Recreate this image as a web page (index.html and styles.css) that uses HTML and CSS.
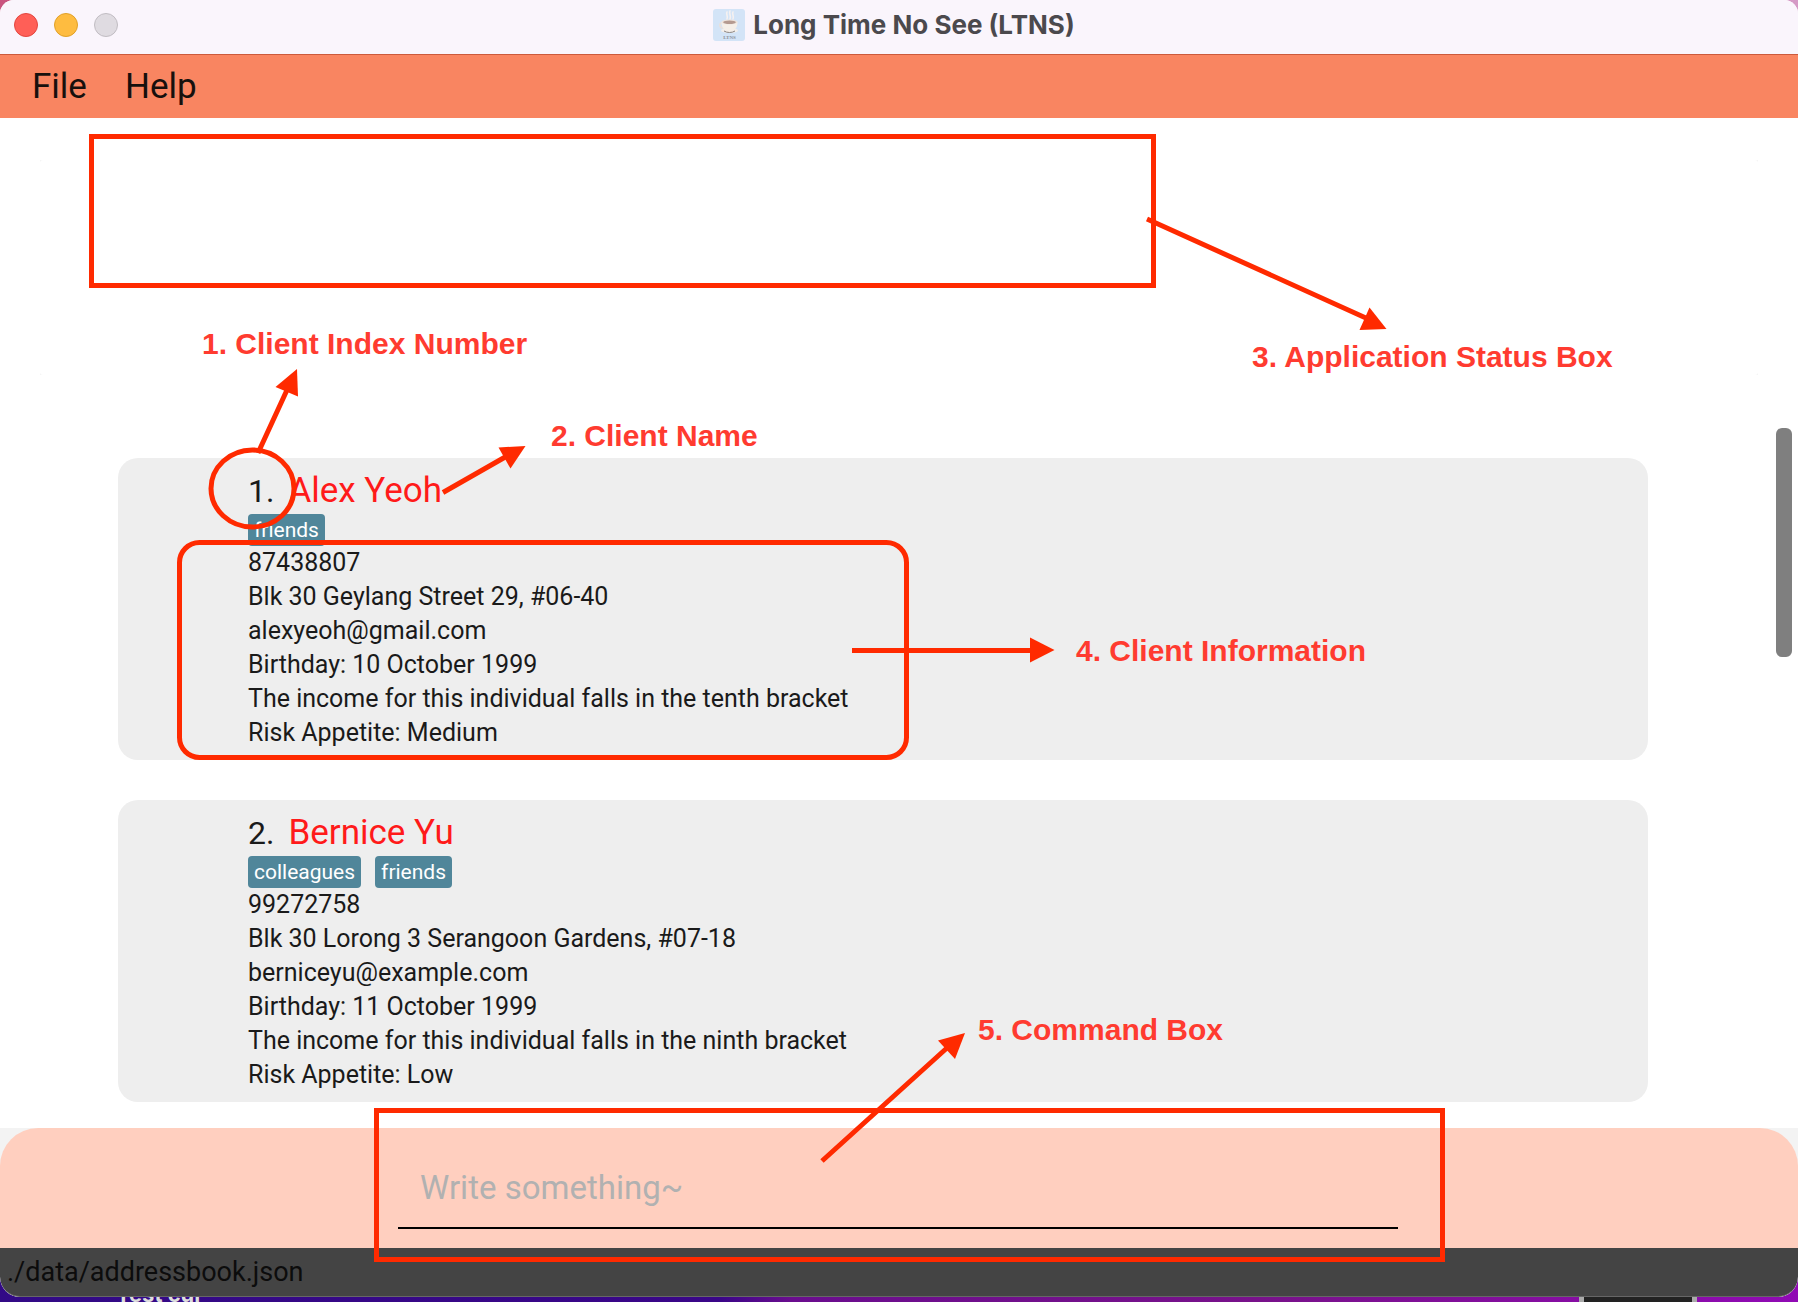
FILE: index.html
```html
<!DOCTYPE html>
<html lang="en">
<head>
<meta charset="utf-8">
<meta name="viewport" content="width=device-width, initial-scale=1">
<title>Long Time No See (LTNS)</title>
<link rel="stylesheet" href="styles.css">
</head>
<body>
<div class="desktop">
  <div class="window">
    <header class="titlebar">
      <div class="lights">
        <button class="light light-close" aria-label="Close"></button>
        <button class="light light-minimise" aria-label="Minimise"></button>
        <button class="light light-zoom" aria-label="Zoom" disabled></button>
      </div>
      <h1 class="title">
        <svg class="app-icon" viewBox="0 0 32 32" aria-hidden="true">
          <rect width="32" height="32" rx="3" fill="#d3e4f7"/>
          <g fill="none" stroke="#f6f1f0" stroke-width="1.6" stroke-linecap="round">
            <path d="M14 3c-1.500 2 1.500 4 0 7M17 2c-1.500 2 1.500 4 0 8M20 3c-1.500 2 1.500 4 0 7"/>
          </g>
          <path d="M9 14c-3-.5-3 5 1 5" fill="none" stroke="#e9e0db" stroke-width="1.500"/>
          <ellipse cx="16.500" cy="21.500" rx="8.500" ry="2.300" fill="#f3eeea"/>
          <path d="M11 22c3 2 8 2 11 0" fill="none" stroke="#8a8583" stroke-width="1"/>
          <path d="M8.500 13c0 6 3 9 8 9s8-3 8-9z" fill="#f5efe8"/>
          <ellipse cx="16.500" cy="13" rx="8" ry="2.600" fill="#eee4dc"/>
          <ellipse cx="16.500" cy="13.200" rx="6.300" ry="1.700" fill="#b49a90"/>
          <text class="app-icon-text" x="16.500" y="30" text-anchor="middle">LTNS</text>
        </svg>
        Long Time No See (LTNS)
      </h1>
    </header>

    <nav class="menubar">
      <button class="menu">File</button>
      <button class="menu">Help</button>
    </nav>

    <main class="content">
      <div class="status-frame"><div class="status-box" role="status"></div></div>
      <ol class="clients">
        <li class="client">
          <h2 class="client-head"><span class="client-index">1.</span><span class="client-name">Alex Yeoh</span></h2>
          <div class="tags"><span class="tag">friends</span></div>
          <p class="line">87438807</p>
          <p class="line">Blk 30 Geylang Street 29, #06-40</p>
          <p class="line">alexyeoh@gmail.com</p>
          <p class="line">Birthday: 10 October 1999</p>
          <p class="line">The income for this individual falls in the tenth bracket</p>
          <p class="line">Risk Appetite: Medium</p>
        </li>
        <li class="client">
          <h2 class="client-head"><span class="client-index">2.</span><span class="client-name">Bernice Yu</span></h2>
          <div class="tags"><span class="tag">colleagues</span><span class="tag">friends</span></div>
          <p class="line">99272758</p>
          <p class="line">Blk 30 Lorong 3 Serangoon Gardens, #07-18</p>
          <p class="line">berniceyu@example.com</p>
          <p class="line">Birthday: 11 October 1999</p>
          <p class="line">The income for this individual falls in the ninth bracket</p>
          <p class="line">Risk Appetite: Low</p>
        </li>
      </ol>
      <div class="scroll-thumb"></div>
    </main>

    <form class="command">
      <div class="command-panel">
        <input class="command-input" type="text" aria-label="Command" placeholder="Write something~">
      </div>
    </form>

    <footer class="statusbar">./data/addressbook.json</footer>
  </div>

  <div class="behind" aria-hidden="true">
    <span class="behind-label">Test cur</span>
    <span class="behind-window"></span>
  </div>

  <div class="notes">
    <svg class="marks" aria-hidden="true">
      <g class="outline">
        <path d="M91.500 136.500H1153.500V285.500H91.500Z"/>
        <ellipse cx="252.500" cy="488.500" rx="41.500" ry="38.500"/>
        <rect x="179.500" y="542.500" width="727" height="215" rx="20"/>
        <path d="M376.500 1110.500H1442.500V1259.500H376.500Z"/>
        <path d="M258 453L287 390M443 492.500L507 456M852 650.500H1032M1147 219L1367 318.500M822 1161L948 1047"/>
      </g>
      <g class="heads">
        <path d="M297 369L275.500 387L298 396.500Z"/>
        <path d="M525.500 446L498.500 447.500L510.500 468.500Z"/>
        <path d="M1054.500 650L1030 637.500V662.500Z"/>
        <path d="M1386.500 329L1369.500 307.500L1359.500 330Z"/>
        <path d="M965 1033L938 1040.500L955 1059Z"/>
      </g>
    </svg>
    <span class="note note-index">1. Client Index Number</span>
    <span class="note note-name">2. Client Name</span>
    <span class="note note-status">3. Application Status Box</span>
    <span class="note note-info">4. Client Information</span>
    <span class="note note-command">5. Command Box</span>
  </div>
</div>
</body>
</html>
```
FILE: styles.css
```css
* {
  box-sizing: border-box;
}

body,
h1,
h2,
p,
ol {
  margin: 0;
  padding: 0;
}

body {
  font-family: Roboto, "Liberation Sans", sans-serif;
  color: #1a1a1a;
}

button,
input {
  font: inherit;
  border: 0;
  padding: 0;
  background: none;
}

.desktop {
  position: relative;
  min-height: 100vh;
  overflow: hidden;
  display: flex;
  flex-direction: column;
  background:
    linear-gradient(90deg, #c9547f, #d59ac6) top / 100% 50% no-repeat,
    linear-gradient(90deg, #320a86 0%, #3a0688 40%, #6a0d8e 44%, #78128a 70%, #900ab4 100%);
}

/* Application window */
.window {
  flex: 1;
  display: flex;
  flex-direction: column;
  overflow: hidden;
  border-radius: 14px 14px 20px 20px;
  background: #fff;
}

.titlebar {
  display: grid;
  grid-template-columns: 1fr auto 1fr;
  align-items: center;
  height: 55px;
  padding: 0 14px 4px;
  background: #faf5fc;
  border-bottom: 1px solid #cc5a3c;
}

.lights {
  display: flex;
  gap: 16px;
}

.light {
  width: 24px;
  height: 24px;
  border-radius: 50%;
  border: 1px solid;
}

.light-close {
  background: #ff5f57;
  border-color: #e2463f;
}

.light-minimise {
  background: #febc40;
  border-color: #e0a028;
}

.light-zoom {
  background: #dfdbe1;
  border-color: #c0bcc2;
}

.title {
  grid-column: 2;
  display: flex;
  align-items: center;
  gap: 8px;
  padding-right: 10px;
  font: 700 26px/32px Inter, sans-serif;
  color: #4b494d;
}

.app-icon {
  width: 32px;
  height: 32px;
}

.app-icon-text {
  font: 700 5px "Liberation Serif", serif;
  fill: #8d9199;
}

.menubar {
  display: flex;
  gap: 38px;
  height: 63px;
  padding: 0 32px;
  background: #f98561;
}

.menu {
  font-size: 35px;
  line-height: 63px;
  color: #17100d;
}

.content {
  position: relative;
  flex: 1;
  padding: 42px 40px 26px;
}

.status-frame {
  background: #f4f4f4;
}

.status-box {
  min-height: 215px;
  border-radius: 3px;
  background: #fff;
}

.clients {
  display: flex;
  flex-direction: column;
  gap: 40px;
  margin: 83px 110px 0 78px;
  list-style: none;
}

.client {
  padding: 10px 130px;
  border-radius: 20px;
  background: #eee;
}

.client-head {
  display: flex;
  align-items: center;
  gap: 14px;
  font-weight: 400;
  line-height: 46px;
}

.client-index {
  font-size: 32px;
}

.client-name {
  font-size: 35px;
  color: #ff1a1a;
}

.tags {
  display: flex;
  gap: 14px;
}

.tag {
  padding: 0 6px;
  border-radius: 4px;
  background: #50869a;
  color: #fff;
  font-size: 21px;
  line-height: 32px;
}

.line {
  font-size: 25px;
  line-height: 34px;
}

.scroll-thumb {
  position: absolute;
  top: 310px;
  right: 6px;
  width: 16px;
  height: 229px;
  border-radius: 6px;
  background: #7f7f7f;
}

.command {
  background: #f3f3f3;
}

.command-panel {
  display: flex;
  justify-content: center;
  padding: 19px 400px 19px 398px;
  border-radius: 38px 38px 0 0;
  background: #ffcfbf;
}

.command-input {
  flex: 1;
  min-width: 0;
  height: 82px;
  padding: 0 22px;
  border-bottom: 2px solid #000;
  font-size: 33px;
}

.command-input::placeholder {
  color: #b1b1b1;
  opacity: 1;
}

.statusbar {
  padding: 0 7px;
  border-bottom: 1px solid #666;
  border-radius: 0 0 20px 20px;
  background: #444;
  color: #0c0c0c;
  font-size: 27px;
  line-height: 48px;
}

/* Strip of desktop that shows below the window */
.behind {
  display: flex;
  justify-content: space-between;
  height: 5px;
  padding: 0 101px 0 116px;
  overflow: hidden;
}

.behind-label {
  align-self: flex-end;
  color: #ddd;
  font: 700 22px/16px Inter, sans-serif;
}

.behind-window {
  width: 118px;
  border: solid #aaa;
  border-width: 0 5px;
  background: #222;
}

/* Annotations laid over the window */
.notes {
  position: absolute;
  inset: 0;
  pointer-events: none;
}

.marks {
  display: block;
  width: 100%;
  height: 100%;
}

.outline {
  fill: none;
  stroke: #ff2a00;
  stroke-width: 5;
}

.heads {
  fill: #ff2a00;
}

.note {
  position: absolute;
  color: #ff3b30;
  font: 700 30px/34px "Liberation Sans", Arial, sans-serif;
  white-space: nowrap;
}

.note-index {
  left: 202px;
  top: 327px;
}

.note-name {
  left: 551px;
  top: 419px;
}

.note-status {
  left: 1252px;
  top: 340px;
}

.note-info {
  left: 1076px;
  top: 634px;
}

.note-command {
  left: 978px;
  top: 1013px;
}
```
